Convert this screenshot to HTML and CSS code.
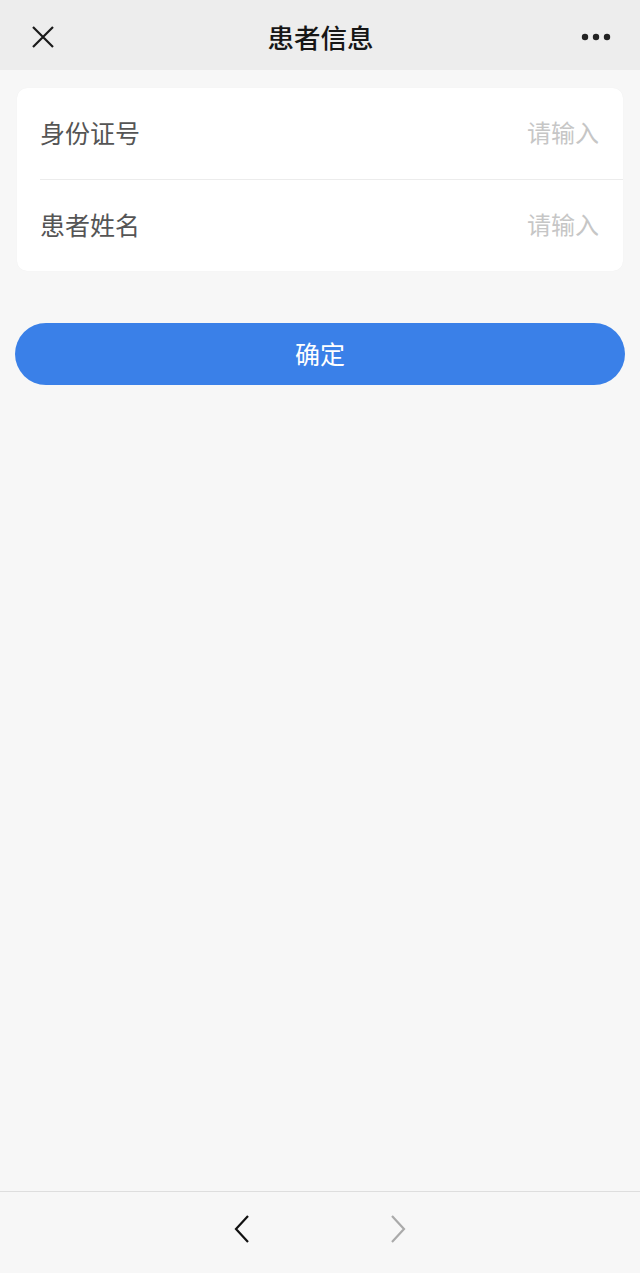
FILE: index.html
```html
<!DOCTYPE html>
<html lang="zh-CN">
<head>
    <meta charset="UTF-8">
    <title>患者信息</title>
    <link rel="stylesheet" href="styles.css">
</head>
<body>
<div class="page">
    <div class="top-bar">
        <span class="top-left">
            <svg width="26" height="26" viewBox="0 0 26 26"><path d="M3 3 L23 23 M23 3 L3 23" stroke="#1a1a1a" stroke-width="2.2" fill="none"/></svg>
        </span>
        <span class="title">患者信息</span>
        <span class="top-right">
            <svg width="30" height="8" viewBox="0 0 30 8"><circle cx="4" cy="4" r="3.2" fill="#222"/><circle cx="15" cy="4" r="3.2" fill="#222"/><circle cx="26" cy="4" r="3.2" fill="#222"/></svg>
        </span>
    </div>

    <div class="form">
        <div class="row">
            <span class="label">身份证号</span>
            <span class="hint">请输入</span>
        </div>
        <div class="row">
            <span class="label">患者姓名</span>
            <span class="hint">请输入</span>
        </div>
    </div>

    <div class="btn">确定</div>

    <div class="nav-bar">
        <svg width="20" height="30" viewBox="0 0 20 30"><path d="M16 2 L4 15 L16 28" stroke="#111" stroke-width="2.2" fill="none"/></svg>
        <svg width="20" height="30" viewBox="0 0 20 30"><path d="M4 2 L16 15 L4 28" stroke="#aaa" stroke-width="2.2" fill="none"/></svg>
    </div>
</div>
</body>
</html>
```

FILE: styles.css
```css
* {
    margin: 0;
    padding: 0;
    box-sizing: border-box;
}

body {
    background: #f7f7f7;
    font-family: "Noto Sans CJK SC", "Noto Sans", sans-serif;
}

.page {
    height: 1273px;
    display: flex;
    flex-direction: column;
}

.top-bar {
    height: 70px;
    background: #ededed;
    display: grid;
    grid-template-columns: 1fr auto 1fr;
    align-items: center;
    padding: 4px 29px 0 30px;
}

.top-left {
    display: flex;
}

.top-right {
    display: flex;
    justify-content: flex-end;
}

.title {
    font-size: 26.5px;
    font-weight: 500;
    color: #161616;
    line-height: 30px;
}

.form {
    margin: 18px 17px 0;
    background: #fff;
    border-radius: 10px;
    box-shadow: 0 0 1px rgba(0, 0, 0, 0.06);
}

.row {
    height: 91px;
    margin-left: 23px;
    padding-right: 24px;
    padding-bottom: 4px;
    display: flex;
    align-items: center;
    justify-content: space-between;
}

.row + .row {
    border-top: 1px solid #ececec;
    height: 92px;
}

.label {
    font-size: 25px;
    color: #555;
    line-height: 30px;
}

.hint {
    font-size: 24px;
    color: #c6c6c6;
    line-height: 30px;
}

.btn {
    margin: 52px 15px 0;
    height: 62px;
    border-radius: 31px;
    background: #3a80e8;
    color: #fff;
    font-size: 25px;
    display: flex;
    align-items: center;
    justify-content: center;
    padding-bottom: 2px;
}

.nav-bar {
    margin-top: auto;
    height: 82px;
    border-top: 1px solid #dedede;
    display: flex;
    justify-content: center;
    align-items: center;
    gap: 136px;
    padding-bottom: 8px;
}
```
